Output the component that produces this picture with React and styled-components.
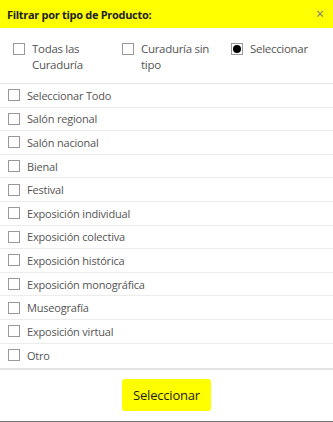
import styled, { createGlobalStyle } from "styled-components";

const GlobalStyle = createGlobalStyle`
    body {
        margin: 0;
        background: #fff;
        font-family: "Open Sans", "Liberation Sans", sans-serif;
    }
`

const Modal = styled.div`
    width: 333px;
    height: 422px;
    box-sizing: border-box;
    border-bottom: 1px solid #777;
    display: flex;
    flex-direction: column;
    background: #fff;
`

const Header = styled.div`
    height: 28px;
    flex: none;
    background: #ffff00;
    display: flex;
    align-items: center;
    justify-content: space-between;
    padding: 0 9px 0 7px;
`

const Title = styled.span`
    font-size: 11px;
    font-weight: 700;
    color: #222;
    letter-spacing: -0.3px;
`

const Close = styled.span`
    font-size: 14px;
    color: #777;
    line-height: 1;
`

const Options = styled.div`
    display: grid;
    grid-template-columns: 109px 109px 1fr;
    padding: 13px 0 10px 13px;
    border-bottom: 1px solid #e8e8e8;
    flex: none;
`

const Option = styled.label`
    display: flex;
    align-items: flex-start;
    gap: 7px;
    font-size: 11.5px;
    line-height: 16px;
    color: #555;
    letter-spacing: -0.3px;
`

const Box = styled.span`
    width: 10px;
    height: 10px;
    flex: none;
    border: 1px solid #999;
    margin-top: ${(props) => (props.top ? props.top : "0")};
    background: #fff;
    display: flex;
    align-items: center;
    justify-content: center;
`

const Dot = styled.span`
    width: 8px;
    height: 8px;
    border-radius: 50%;
    background: #000;
`

const List = styled.div`
    display: flex;
    flex-direction: column;
    flex: 1;
`

const Row = styled.label`
    display: flex;
    align-items: center;
    gap: 7px;
    height: 23.6px;
    padding-left: 8px;
    box-sizing: border-box;
    border-bottom: ${(props) => (props.last ? "none" : "1px solid #ececec")};
    font-size: 11px;
    color: #555;
    letter-spacing: -0.2px;
`

const Footer = styled.div`
    border-top: 2px solid #e4e4e4;
    height: 53px;
    flex: none;
    display: flex;
    justify-content: center;
    align-items: flex-start;
    padding-top: 9px;
    box-sizing: border-box;
`

const Button = styled.button`
    width: 89px;
    height: 32px;
    background: #ffff00;
    border: none;
    border-radius: 3px;
    font-family: inherit;
    font-size: 13px;
    color: #222;
    letter-spacing: -0.2px;
`

const items = [
    "Seleccionar Todo",
    "Salón regional",
    "Salón nacional",
    "Bienal",
    "Festival",
    "Exposición individual",
    "Exposición colectiva",
    "Exposición histórica",
    "Exposición monográfica",
    "Museografía",
    "Exposición virtual",
    "Otro",
]

const App = () => {
    return (
        <>
            <GlobalStyle />
            <Modal>
                <Header>
                    <Title>Filtrar por tipo de Producto:</Title>
                    <Close>×</Close>
                </Header>
                <Options>
                    <Option>
                        <Box top="2px" />
                        <span>Todas las<br />Curaduría</span>
                    </Option>
                    <Option>
                        <Box top="2px" />
                        <span>Curaduría sin<br />tipo</span>
                    </Option>
                    <Option>
                        <Box top="2px"><Dot /></Box>
                        <span>Seleccionar</span>
                    </Option>
                </Options>
                <List>
                    {items.map((item, index) => (
                        <Row key={index} last={index === items.length - 1}>
                            <Box />
                            {item}
                        </Row>
                    ))}
                </List>
                <Footer>
                    <Button>Seleccionar</Button>
                </Footer>
            </Modal>
        </>
    )
}

export default App
